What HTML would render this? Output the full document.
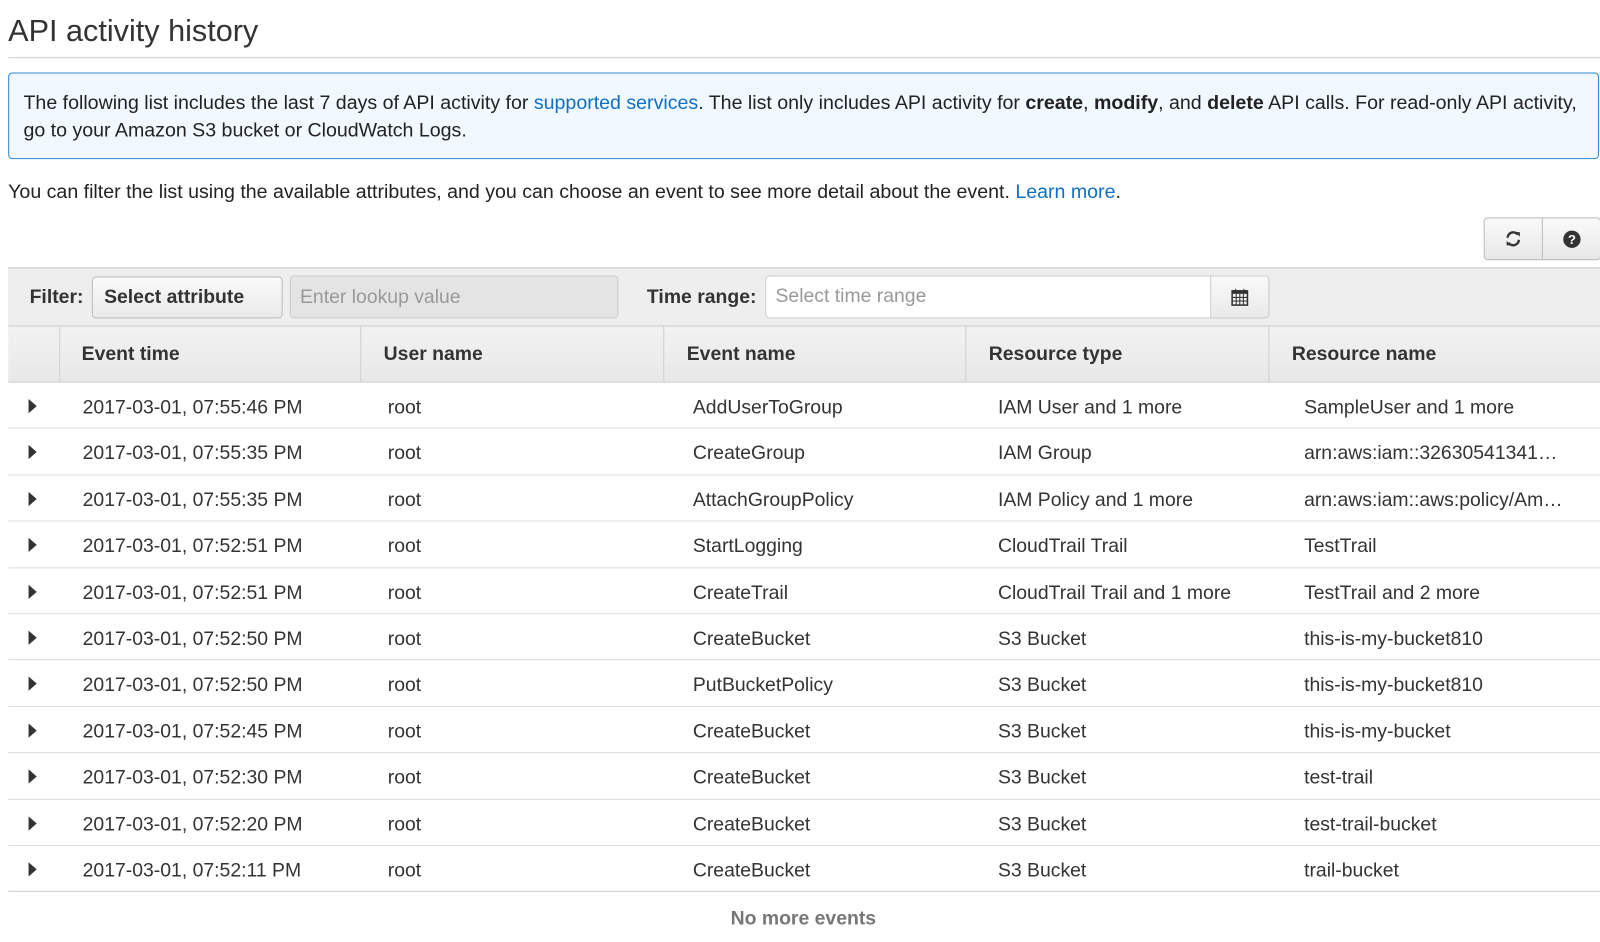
<!DOCTYPE html>
<html><head><meta charset="utf-8"><style>
*{box-sizing:border-box;margin:0;padding:0}
body{width:1600px;height:941px;overflow:hidden;background:#fff;font-family:"Liberation Sans",Arial,sans-serif;color:#333;position:relative}
#w{position:absolute;left:0;top:0;width:1568px;height:923px;transform:scale(1.0204);transform-origin:0 0}
.a{position:absolute;white-space:nowrap}
h1{position:absolute;left:8px;top:14px;font-size:30px;font-weight:normal;color:#333}
.hr{position:absolute;left:8px;right:0;top:56px;height:1px;background:#ccc}
.info{position:absolute;left:8px;top:71px;width:1559px;height:85px;border:1px solid #2e87d1;border-radius:4px;background:#f1f8ff;font-size:19.2px;line-height:27px;padding:16px 14px;color:#222;white-space:nowrap}
a{color:#0f6fc6;text-decoration:none}
.p{left:8px;top:178px;font-size:19.2px;color:#222}
.btns{position:absolute;left:1454px;top:213px;width:115px;height:42px;border:1px solid #bbb;border-radius:4px;background:linear-gradient(#fafafa,#e8e8e8)}
.btns div{position:absolute;top:0;height:40px;width:57px;display:flex;align-items:center;justify-content:center}
.fbar{position:absolute;left:8px;top:262px;width:1600px;height:57px;background:#eee;border-top:1px solid #ccc}
.hdr{position:absolute;left:8px;top:319px;width:1600px;height:56px;background:linear-gradient(#f2f2f2,#e8e8e8);border-top:1px solid #ccc;border-bottom:1px solid #ccc}
.sep{position:absolute;top:0;width:1px;height:55px;background:#d0d0d0}
.th{top:17px;font-size:19px;font-weight:bold;color:#333}
.row{position:absolute;left:8px;width:1600px;height:45.4px;border-bottom:1px solid #ddd;font-size:19px;color:#333}
.row span{position:absolute;top:14px;white-space:nowrap}
.tri{position:absolute;left:20px;top:16px;width:0;height:0;border-top:7px solid transparent;border-bottom:7px solid transparent;border-left:8px solid #333}
</style></head><body><div id="w">
<h1>API activity history</h1>
<div class="hr"></div>
<div class="info">The following list includes the last 7 days of API activity for <a>supported services</a>. The list only includes API activity for <b>create</b>, <b>modify</b>, and <b>delete</b> API calls. For read-only API activity,<br>go to your Amazon S3 bucket or CloudWatch Logs.</div>
<div class="a p">You can filter the list using the available attributes, and you can choose an event to see more detail about the event. <a>Learn more</a>.</div>
<div class="btns"><div style="left:0;border-right:1px solid #bbb"><svg width="18" height="18" viewBox="0 0 18 18"><path d="M3.5 8A5.5 5.5 0 0 1 13.5 5" fill="none" stroke="#333" stroke-width="2.4"/><path d="M11 2.5L15.5 2.5 15.5 7z" fill="#333"/><path d="M14.5 10A5.5 5.5 0 0 1 4.5 13" fill="none" stroke="#333" stroke-width="2.4"/><path d="M7 15.5L2.5 15.5 2.5 11z" fill="#333"/></svg></div><div style="left:57px"><span style="display:inline-block;width:17px;height:17px;border-radius:50%;background:#333;color:#fff;font-size:13px;font-weight:bold;line-height:17px;text-align:center">?</span></div></div>
<div class="fbar">
<div class="a" style="left:21px;top:18px;font-size:19px;font-weight:bold">Filter:</div>
<div class="a" style="left:82px;top:8px;width:187px;height:41px;border:1px solid #bbb;border-radius:4px;background:linear-gradient(#fafafa,#e9e9e9);font-size:19px;font-weight:bold;padding:9px 11px">Select attribute</div>
<div class="a" style="left:276px;top:7px;width:322px;height:42px;border:1px solid #ccc;border-radius:4px;background:#e4e4e4;font-size:19px;color:#999;padding:10px 9px">Enter lookup value</div>
<div class="a" style="left:626px;top:18px;font-size:19px;font-weight:bold">Time range:</div>
<div class="a" style="left:742px;top:7px;width:494px;height:42px;border:1px solid #ccc;border-radius:4px;background:#fff;font-size:19px;color:#999;padding:9px 9px">Select time range</div>
<div class="a" style="left:1178px;top:7px;width:58px;height:42px;border:1px solid #ccc;border-radius:0 4px 4px 0;background:linear-gradient(#fafafa,#e9e9e9)"><svg width="18" height="18" viewBox="0 0 18 18" style="position:absolute;left:19px;top:11px"><rect x="1.5" y="3" width="15" height="14" fill="none" stroke="#333" stroke-width="1.5"/><rect x="1.5" y="3" width="15" height="3" fill="#333"/><path d="M5 1v4M13 1v4M2 9.5h14M2 13h14M5.5 6v11M9 6v11M12.5 6v11" stroke="#333" stroke-width="1"/></svg></div>
</div>
<div class="hdr">
<div class="sep" style="left:50px"></div><div class="sep" style="left:345px"></div><div class="sep" style="left:642px"></div><div class="sep" style="left:938px"></div><div class="sep" style="left:1235px"></div>
<div class="a th" style="left:72px">Event time</div>
<div class="a th" style="left:368px">User name</div>
<div class="a th" style="left:665px">Event name</div>
<div class="a th" style="left:961px">Resource type</div>
<div class="a th" style="left:1258px">Resource name</div>
</div>
<div class="row" style="top:375px"><i class="tri"></i><span style="left:73px">2017-03-01, 07:55:46 PM</span><span style="left:372px">root</span><span style="left:671px">AddUserToGroup</span><span style="left:970px">IAM User and 1 more</span><span style="left:1270px">SampleUser and 1 more</span></div>
<div class="row" style="top:420.4px"><i class="tri"></i><span style="left:73px">2017-03-01, 07:55:35 PM</span><span style="left:372px">root</span><span style="left:671px">CreateGroup</span><span style="left:970px">IAM Group</span><span style="left:1270px">arn:aws:iam::32630541341…</span></div>
<div class="row" style="top:465.8px"><i class="tri"></i><span style="left:73px">2017-03-01, 07:55:35 PM</span><span style="left:372px">root</span><span style="left:671px">AttachGroupPolicy</span><span style="left:970px">IAM Policy and 1 more</span><span style="left:1270px">arn:aws:iam::aws:policy/Am…</span></div>
<div class="row" style="top:511.2px"><i class="tri"></i><span style="left:73px">2017-03-01, 07:52:51 PM</span><span style="left:372px">root</span><span style="left:671px">StartLogging</span><span style="left:970px">CloudTrail Trail</span><span style="left:1270px">TestTrail</span></div>
<div class="row" style="top:556.6px"><i class="tri"></i><span style="left:73px">2017-03-01, 07:52:51 PM</span><span style="left:372px">root</span><span style="left:671px">CreateTrail</span><span style="left:970px">CloudTrail Trail and 1 more</span><span style="left:1270px">TestTrail and 2 more</span></div>
<div class="row" style="top:602px"><i class="tri"></i><span style="left:73px">2017-03-01, 07:52:50 PM</span><span style="left:372px">root</span><span style="left:671px">CreateBucket</span><span style="left:970px">S3 Bucket</span><span style="left:1270px">this-is-my-bucket810</span></div>
<div class="row" style="top:647.4px"><i class="tri"></i><span style="left:73px">2017-03-01, 07:52:50 PM</span><span style="left:372px">root</span><span style="left:671px">PutBucketPolicy</span><span style="left:970px">S3 Bucket</span><span style="left:1270px">this-is-my-bucket810</span></div>
<div class="row" style="top:692.8px"><i class="tri"></i><span style="left:73px">2017-03-01, 07:52:45 PM</span><span style="left:372px">root</span><span style="left:671px">CreateBucket</span><span style="left:970px">S3 Bucket</span><span style="left:1270px">this-is-my-bucket</span></div>
<div class="row" style="top:738.2px"><i class="tri"></i><span style="left:73px">2017-03-01, 07:52:30 PM</span><span style="left:372px">root</span><span style="left:671px">CreateBucket</span><span style="left:970px">S3 Bucket</span><span style="left:1270px">test-trail</span></div>
<div class="row" style="top:783.6px"><i class="tri"></i><span style="left:73px">2017-03-01, 07:52:20 PM</span><span style="left:372px">root</span><span style="left:671px">CreateBucket</span><span style="left:970px">S3 Bucket</span><span style="left:1270px">test-trail-bucket</span></div>
<div class="row" style="top:829px;border-bottom:1px solid #ccc"><i class="tri"></i><span style="left:73px">2017-03-01, 07:52:11 PM</span><span style="left:372px">root</span><span style="left:671px">CreateBucket</span><span style="left:970px">S3 Bucket</span><span style="left:1270px">trail-bucket</span></div>
<div class="a" style="left:716px;top:890px;font-size:19px;font-weight:bold;color:#777">No more events</div>
</div></body></html>
